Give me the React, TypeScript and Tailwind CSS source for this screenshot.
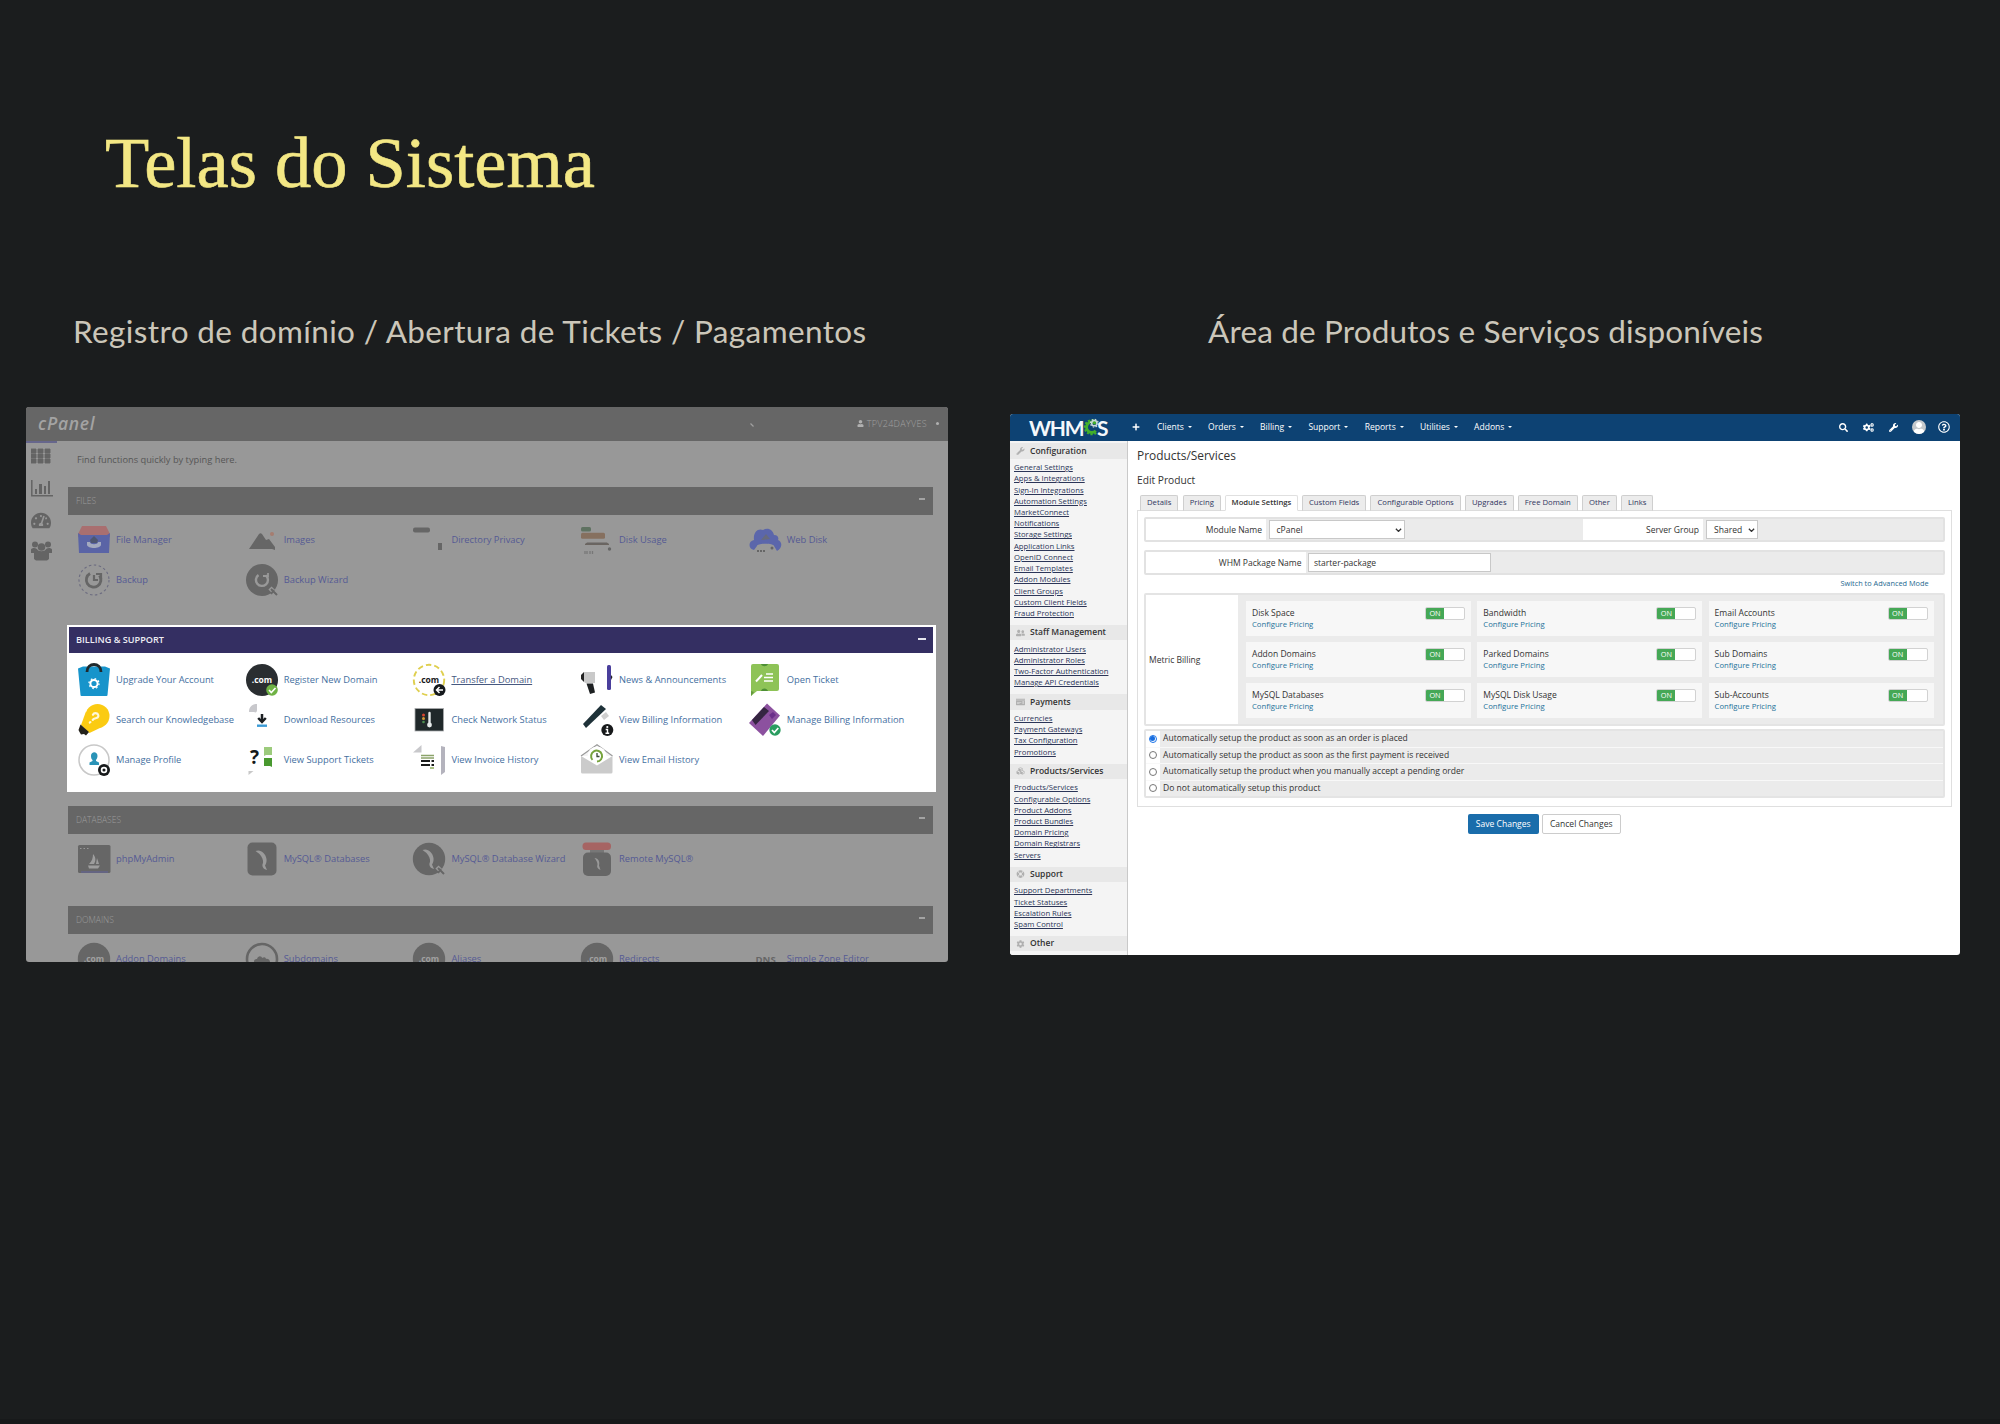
import React from "react";
import { FaSearch, FaCogs, FaWrench, FaUser, FaUserFriends, FaPlus, FaCubes, FaLifeRing, FaCog, FaTachometerAlt, FaMoneyCheck, FaRegQuestionCircle } from "react-icons/fa";

const G = "#666666";

function Icon({ children }: { children?: React.ReactNode }) {
  return (
    <svg viewBox="0 0 32 32" className="h-8 w-8 shrink-0 overflow-visible" fill="none">
      {children}
    </svg>
  );
}

const Com = ({ fill, y = 18.5 }: { fill: string; y?: number }) => (
  <text x="16" y={y} textAnchor="middle" fill={fill} fontSize="8.5" fontWeight="700" fontFamily="Open Sans, sans-serif">.com</text>
);

const Dolphin = ({ dy = 0 }: { dy?: number }) => (
  <path transform={`translate(0 ${dy})`} d="M9.500 8c5-2 10 2 11 8 .400 3-.500 5-1.500 6.500L21 27c-4-1-5.500-4-4-7 .500-3-1-6-3.500-9z" fill="#9b9b9b" />
);

const icons: Record<string, React.ReactNode> = {
  file: (<><path d="M4 2h24l4 8v3H0v-3z" fill="#a96f70" /><path d="M0 9l3 2h26l3-2-1 20H1z" fill="#5a64a6" /><path d="M9 18h3c0 3 8 3 8 0h3v3c-1 4-13 4-14 0z" fill="#a4aabf" /><path d="M12 16l4-4 4 4-1 3h-6z" fill="#4e5670" /></>),
  images: (<><path d="M3 25l10-15c1-1 2-1 3 0l4 6 3-1 6 8v3l-3-1z" fill={G} /><circle cx="26" cy="10" r="2" fill="#a67d70" /></>),
  privacy: (<><rect x="0" y="3.5" width="17" height="5" rx="2" fill={G} /><rect x="25" y="19" width="4" height="7" fill={G} /></>),
  usage: (<><rect x="0" y="3" width="10" height="4.5" rx="1.5" fill="#5f7261" /><rect x="0" y="8.7" width="24" height="6" rx="1.5" fill="#86705f" /><path d="M4 20.5l2-1.5h20l2 1.5z" fill="#666" stroke="#6b6560" /><circle cx="28.5" cy="25" r="1.7" fill={G} /><path d="M4 27v3M6 27v3M9 27v3M11.500 27v3" stroke="#777" strokeWidth="1.300" /></>),
  web: (<><path d="M5 26c-6-1-6-9 0-10C4 8 9 4 14 6c5-3 10 0 11 5 4 0 5 3 4 5 5 2 4 9-1 11l-3-5c0-3-17-3-17 0z" fill="#5b66ab" /><path d="M12 16l5-6 4 5z" fill="#686b7d" /><path d="M8 27h9" stroke="#666" strokeWidth="2" strokeDasharray="2 1" /><circle cx="23" cy="24" r="1.500" fill={G} /></>),
  backup: (<><circle cx="16" cy="16" r="15" stroke="#6c6c80" strokeWidth="1.1" strokeDasharray="2.500 2.500" /><path d="M12 9.500A7.300 7.300 0 1 0 21.500 11.500" stroke={G} strokeWidth="2.800" /><path d="M16 11v5h4M18 10h5V15" stroke={G} strokeWidth="2.200" /></>),
  wizard: (<><circle cx="16" cy="16" r="16" fill={G} /><path d="M12.500 11A6 6 0 1 0 20 11.500" stroke="#999" strokeWidth="2.400" /><path d="M17 12h5V9" stroke="#999" strokeWidth="1.800" /><path d="M24 24l7 7" stroke="#999" strokeWidth="4.500" /><path d="M25 25l6 6M25 30l3-4" stroke={G} strokeWidth="2" /></>),
  bag: (<><path d="M0 4.500l5-2h22l5 2L29.500 31a1 1 0 0 1-1 1h-25a1 1 0 0 1-1-1z" fill="#1794cb" /><path d="M9 8C9-2 23-2 23 8" stroke="#20282c" strokeWidth="2.800" /><circle cx="16" cy="19.500" r="3.600" stroke="#fff" strokeWidth="2" /><circle cx="16" cy="19.500" r="5" stroke="#fff" strokeWidth="1.300" strokeDasharray="1.600 2.320" /></>),
  register: (<><circle cx="16" cy="16" r="16" fill="#2a2e31" /><Com fill="#fff" /><circle cx="26" cy="26" r="5.800" fill="#6fb244" /><path d="M23 26l2.300 2.500L29.500 24" stroke="#fff" strokeWidth="1.600" /></>),
  transfer: (<><circle cx="16" cy="16" r="15.200" stroke="#dfcf4e" strokeWidth="1.900" strokeDasharray="5.500 3" /><Com fill="#17191a" /><circle cx="26.500" cy="26" r="6" fill="#15191c" /><path d="M30 26h-6M26.500 23l-3 3 3 3" stroke="#fff" strokeWidth="1.500" /></>),
  news: (<><path d="M0 11l3-3v10l-3-3z" fill="#222" /><path d="M3 8h11v11H5c-2 0-2-2-2-3z" fill="#c9c9c9" /><path d="M5.500 19.500H12l2 9-5 1.500z" fill="#1d2022" /><rect x="26" y="1" width="4" height="25" rx="1.500" fill="#4a3f9c" /><path d="M30 11l1.500 2-1.500 3z" fill="#222" /></>),
  ticket: (<><path d="M2 2a2 2 0 0 1 2-2h24a2 2 0 0 1 2 2v23a2 2 0 0 1-2 2H8l-6 5z" fill="#8ec357" /><path d="M12 0h7c-1 3-6 3-7 0zM12 27h7c-1-3.500-6-3.500-7 0z" fill="#4d8f35" /><path d="M2 27l3 1-3 4z" fill="#64983f" /><path d="M7 17.500l6-6.500" stroke="#fff" strokeWidth="2" /><path d="M17 10h7M15 13.500h9M15 17h9" stroke="#fff" strokeWidth="1.500" /></>),
  bulb: (<><circle cx="19.500" cy="12" r="12" fill="#fbcb12" /><path d="M8 7.500L3 21l8.500 8L24 23z" fill="#fbcb12" /><path d="M2.500 20.500L11 28l-3 3.500-2-1.500-3 .500L1.500 28l-1-2z" fill="#24221c" /><path d="M14.500 11c1-3 6-2.500 5.500 1-.400 2.500-4 1.500-5 4M13 18.500l-.500.500" stroke="#fff8d8" strokeWidth="2.200" strokeLinecap="round" transform="rotate(8 16 14)" /></>),
  download: (<><path d="M3 8c0-5 3-8 8-8v6c0 2-1 3-3 2z" fill="#c8c8cc" /><path d="M16 10v7M12.200 14l3.800 4 3.800-4" stroke="#1b1f22" strokeWidth="2.500" /><rect x="11" y="20.500" width="10" height="2.400" fill="#3b9bd6" /></>),
  network: (<><rect x="2" y="4.500" width="28.500" height="22.500" fill="#20282a" stroke="#a9aaac" strokeWidth=".8" /><circle cx="10.500" cy="11" r="1.500" fill="#d9442f" /><circle cx="10.500" cy="14.500" r="1.500" fill="#d59a35" /><circle cx="10.500" cy="18" r="1.300" fill="#4c8f50" /><path d="M16.500 9v11" stroke="#e8ecec" strokeWidth="2.400" strokeLinecap="round" /><circle cx="16.500" cy="21" r="2.400" fill="#e8ecec" /></>),
  billing: (<><path d="M2 20L20 1l5 4L5 24z" fill="#1e3138" /><path d="M20 12l5-4 3 4-5 4z" fill="#cfcfcf" /><circle cx="26.300" cy="26" r="6" fill="#17191b" /><circle cx="26.300" cy="23" r="1.100" fill="#fff" /><path d="M24.700 25.500h1.800v3.500M24.500 29.200h3.700" stroke="#fff" strokeWidth="1.400" /></>),
  card: (<><path d="M0 19L18-.500l13 12L14 32z" fill="#8c519f" /><path d="M3 16L15 3l5 4L6.500 21z" fill="#352541" /><path d="M20 11l4-3 3 3-4 4z" fill="#6b2f8a" /><circle cx="26" cy="26" r="5.700" fill="#2a9d60" /><path d="M23 26l2.300 2.500 4-4.500" stroke="#fff" strokeWidth="1.700" /></>),
  profile: (<><circle cx="16" cy="16" r="15" stroke="#c8c8c8" strokeWidth="1.500" /><path d="M13 12c0-5 6.500-5 6.500 0 0 2-1 3-1.500 4v1l3 1.500V21H11.500v-2.500L14.500 17v-1c-1-1-1.500-2-1.500-4z" fill="#2a93b7" /><circle cx="26" cy="26" r="6" fill="#17191b" /><circle cx="26" cy="26" r="2.400" stroke="#fff" strokeWidth="1.700" /></>),
  support: (<><text x="4" y="19.500" fontSize="19" fontWeight="700" fill="#15181a" fontFamily="Open Sans, sans-serif">?</text><path d="M18 3h8v8h-6l-2 1z" fill="#9ccb7c" /><path d="M18 14h8v9l-2-1h-6z" fill="#49992f" /><path d="M2.500 27h5l-5 4z" fill="#c8c8c8" /></>),
  invoice: (<><path d="M0 8.500L8.500 1v7.500z" fill="#c8c8cb" /><path d="M8 11.500h13M8 14h13" stroke="#8ca36a" strokeWidth="1.600" /><path d="M8 17h9M18.500 17h2.500M8 21h9M18.500 21h2.500" stroke="#1a1c1c" strokeWidth="2" /><path d="M17 24h4" stroke="#8fae5e" strokeWidth="1.500" /><path d="M28 2l4 1v25l-4 3z" fill="#b4b3bd" /></>),
  email: (<><path d="M0 12L16 .800 31.500 12" stroke="#9a9a9a" strokeWidth="1.200" fill="#f3f3f3" /><circle cx="16" cy="12" r="9.500" fill="#fff" /><path d="M0 12l16 9.500L31.500 12v16a1.500 1.500 0 0 1-1.500 1.500H1.500A1.500 1.500 0 0 1 0 28z" fill="#cbcbcb" /><path d="M11.500 15.800A5.500 5.500 0 1 1 16 17.600" stroke="#76a33c" strokeWidth="2" /><path d="M16 9v3.500h2.500" stroke="#3b4a36" strokeWidth="1.300" /></>),
  php: (<><rect x="0" y="2" width="32.500" height="28" rx="1.500" fill={G} /><path d="M2 5.500h9" stroke="#999" strokeDasharray="1.500 2" /><path d="M3 29h27" stroke="#64648c" strokeWidth="1.300" /><path d="M15 11c3 3 3 7 1 10h-5c3-3 4-6 4-10zM19 15l2 6h-3zM10 22.500h12l-2 3h-9z" fill="#9d9d9d" /></>),
  mysql: (<><rect x="1.500" y="-.5" width="29" height="33" rx="5" fill={G} /><Dolphin /></>),
  mysqlwiz: (<><circle cx="16" cy="16" r="16.200" fill={G} /><Dolphin dy={-1} /><path d="M24 24l7 7" stroke="#999" strokeWidth="4.500" /><path d="M25 25l6 6M25 30l3-4" stroke={G} strokeWidth="2" /></>),
  remote: (<><rect x="1.500" y="-.5" width="28.500" height="7.500" rx="3.500" fill="#a66463" /><path d="M9 7h14v3H9z" fill="#777" /><rect x="2" y="9.500" width="28" height="23.500" rx="5" fill={G} /><path d="M13.500 15c4 0 5.500 4 4.500 7.500l1.500 4.500c-3-1-4-3-3-5.500 0-2-1-4-3-6.500z" fill="#999" /></>),
  com: (<><circle cx="16" cy="16" r="16.200" fill={G} /><Com fill="#a0a0a0" /></>),
  sub: (<><circle cx="16" cy="16" r="15" stroke={G} strokeWidth="2.600" /><path d="M8 19c0-3 2-3 3-3 1-4 5-3 5-1 3-2 4 0 4 1 3-1 4 2 4 3z" fill={G} /></>),
  dns: (<text x="6.500" y="20" fontSize="9.600" fontWeight="700" fill="#666" fontFamily="Open Sans, sans-serif">DNS</text>),
};

type Item = [string, string];

function Apps({ items, light }: { items: Item[]; light?: boolean }) {
  return (
    <div className="grid auto-rows-[40px] grid-cols-[repeat(5,167.7px)]">
      {items.map(([k, label]) => (
        <div key={label} className="flex items-center gap-[6px] whitespace-nowrap">
          <Icon>{icons[k]}</Icon>
          <span className={light ? (k === "transfer" ? "text-[#46587f] underline" : "text-[#456f9f]") : "font-medium text-[#555a94]"}>{label}</span>
        </div>
      ))}
    </div>
  );
}

function DimPanel({ title, items, className }: { title: string; items: Item[]; className: string }) {
  return (
    <section className={className}>
      <div className="mb-[5px] flex h-7 items-center justify-between bg-[#666] px-2">
        <span className="text-[8.5px] font-light text-[#9c9c9c]">{title}</span>
        <span className="mb-1 h-[1.5px] w-[6px] bg-[#a3a3a3]" />
      </div>
      <div className="pl-[10px]">
        <Apps items={items} />
      </div>
    </section>
  );
}

function CPanel() {
  return (
    <div className="ml-[26px] mt-[61px] flex h-[555px] w-[922px] flex-col overflow-hidden rounded-[3px] bg-[#989898] text-[9.33px] leading-none">
      <div className="flex h-[33.5px] shrink-0 items-center bg-[#666] pb-px pl-[12px] pr-[9px]">
        <span className="text-[17.5px] font-semibold italic tracking-[0.7px] text-[#a3a3a3]">cPanel</span>
        <svg viewBox="0 0 4 4" className="ml-auto mr-[103px] mt-[3px] h-1 w-1"><path d="M.5.500l3 3" stroke="#a0a0a0" strokeWidth="1.200" /></svg>
        <span className="flex items-center text-[#a0a0a0]">
          <FaUser className="mr-[3px] h-[7px] w-[7px] text-[#b0b0b0]" />
          <span className="text-[9px] font-light tracking-[0.3px]">TPV24DAYVES</span>
          <span className="ml-[9px] h-[3px] w-[3px] rounded-full bg-[#b0b0b0]" />
        </span>
      </div>
      <div className="flex min-h-0 flex-1">
        <div className="flex w-[42px] shrink-0 flex-col text-[#646464]">
          <div className="h-[2px] w-[31px] bg-[#66668c]" />
          <svg viewBox="0 0 20 16" className="ml-[5px] mt-[5px] h-4 w-5">
            <path d="M0 1h5v4H0zM7 1h5v4H7zM14 1h5v4h-5zM0 6h5v4H0zM7 6h5v4H7zM14 6h5v4h-5zM0 11h5v4H0zM7 11h5v4H7zM14 11h5v4h-5z" fill="currentColor" stroke="currentColor" strokeWidth=".9" />
          </svg>
          <svg viewBox="0 0 22 17" className="ml-[5px] mt-[16px] h-[17px] w-[22px]">
            <path d="M.8 0v15.800H22" fill="none" stroke="currentColor" strokeWidth="1.500" />
            <path d="M4 9h2v5H4zM8 4h3v10H8zM13 6h2v8h-2zM17 1h2v13h-2z" fill="currentColor" />
          </svg>
          <FaTachometerAlt className="ml-[5px] mt-[14px] h-[19px] w-5" />
          <svg viewBox="0 0 21 20" className="ml-[5px] mt-[11px] h-5 w-[21px]" fill="currentColor">
            <circle cx="4" cy="3.500" r="3" />
            <circle cx="17" cy="3.500" r="3" />
            <circle cx="10.500" cy="6" r="3.800" />
            <path d="M0 8.500c1-2 4-2 6-.500 1 3 8 3 9 0 2-1.500 5-1.500 6 .500V12h-3v6l-2 1.500H5L3 18v-6H0z" />
          </svg>
        </div>
        <div className="mr-[15px] flex min-w-0 flex-1 flex-col whitespace-nowrap">
          <div className="flex h-[46.5px] shrink-0 items-start pl-[9px] pt-[14.500px] text-[9.27px] font-medium text-[#565656]">Find functions quickly by typing here.</div>
          <DimPanel className="h-[138px] shrink-0" title="FILES" items={[["file", "File Manager"], ["images", "Images"], ["privacy", "Directory Privacy"], ["usage", "Disk Usage"], ["web", "Web Disk"], ["backup", "Backup"], ["wizard", "Backup Wizard"]]} />
          <section className="-ml-px -mr-[3px] mb-[14px] h-[167px] shrink-0 bg-white pl-[2px] pr-[3px] pt-[2px]">
            <div className="mb-[7px] flex h-[26px] items-center justify-between bg-[#342f62] pl-[7px] pr-[7px]">
              <span className="text-[9.13px] font-semibold text-[#eeeef4]">BILLING &amp; SUPPORT</span>
              <span className="mb-[3px] h-[2px] w-2 bg-[#e5e5ee]" />
            </div>
            <div className="pl-[9px]">
              <Apps
                light
                items={[["bag", "Upgrade Your Account"], ["register", "Register New Domain"], ["transfer", "Transfer a Domain"], ["news", "News & Announcements"], ["ticket", "Open Ticket"], ["bulb", "Search our Knowledgebase"], ["download", "Download Resources"], ["network", "Check Network Status"], ["billing", "View Billing Information"], ["card", "Manage Billing Information"], ["profile", "Manage Profile"], ["support", "View Support Tickets"], ["invoice", "View Invoice History"], ["email", "View Email History"]]}
              />
            </div>
          </section>
          <DimPanel className="h-[100px] shrink-0" title="DATABASES" items={[["php", "phpMyAdmin"], ["mysql", "MySQL® Databases"], ["mysqlwiz", "MySQL® Database Wizard"], ["remote", "Remote MySQL®"]]} />
          <DimPanel className="h-[56px] shrink-0" title="DOMAINS" items={[["com", "Addon Domains"], ["sub", "Subdomains"], ["com", "Aliases"], ["com", "Redirects"], ["dns", "Simple Zone Editor"]]} />
        </div>
      </div>
    </div>
  );
}

const groups = [
  { title: "Configuration", Ico: FaWrench, links: ["General Settings", "Apps & Integrations", "Sign-In Integrations", "Automation Settings", "MarketConnect", "Notifications", "Storage Settings", "Application Links", "OpenID Connect", "Email Templates", "Addon Modules", "Client Groups", "Custom Client Fields", "Fraud Protection"] },
  { title: "Staff Management", Ico: FaUserFriends, links: ["Administrator Users", "Administrator Roles", "Two-Factor Authentication", "Manage API Credentials"] },
  { title: "Payments", Ico: FaMoneyCheck, links: ["Currencies", "Payment Gateways", "Tax Configuration", "Promotions"] },
  { title: "Products/Services", Ico: FaCubes, links: ["Products/Services", "Configurable Options", "Product Addons", "Product Bundles", "Domain Pricing", "Domain Registrars", "Servers"] },
  { title: "Support", Ico: FaLifeRing, links: ["Support Departments", "Ticket Statuses", "Escalation Rules", "Spam Control"] },
  { title: "Other", Ico: FaCog, links: [] as string[] },
];

const tabs = ["Details", "Pricing", "Module Settings", "Custom Fields", "Configurable Options", "Upgrades", "Free Domain", "Other", "Links"];
const metrics = ["Disk Space", "Bandwidth", "Email Accounts", "Addon Domains", "Parked Domains", "Sub Domains", "MySQL Databases", "MySQL Disk Usage", "Sub-Accounts"];
const setup = [
  "Automatically setup the product as soon as an order is placed",
  "Automatically setup the product as soon as the first payment is received",
  "Automatically setup the product when you manually accept a pending order",
  "Do not automatically setup this product",
];

function Logo() {
  return (
    <div className="flex h-full w-[102px] items-center pl-[19px] font-[Lato,sans-serif] text-[21px] font-bold text-[#f4f8fb]">
      <span className="tracking-[-1.2px]">WHM</span>
      <svg viewBox="0 0 18 18" className="-ml-[1px] h-[18px] w-[17px] overflow-visible" fill="none">
        <path d="M13.500 5.500A5.600 5.600 0 1 0 13.500 13" stroke="#43b02a" strokeWidth="3" />
        <path d="M14.800 4A7.500 7.500 0 1 0 14.800 14.500" stroke="#43b02a" strokeWidth="2.200" strokeDasharray="2.200 1.700" />
        <circle cx="12" cy="5" r="2.800" stroke="#c8d8d8" strokeWidth="1.600" />
        <circle cx="12" cy="5" r="4.100" stroke="#c8d8d8" strokeWidth="1.300" strokeDasharray="1.600 1.620" />
        <circle cx="12" cy="5" r="1.200" fill="#43b02a" />
      </svg>
      <span className="-ml-[2.500px]">S</span>
    </div>
  );
}

function Chevron() {
  return (
    <svg viewBox="0 0 8 5" className="h-[4.500px] w-[7px]" fill="none">
      <path d="M1 .8l3 3 3-3" stroke="#333" strokeWidth="1.500" />
    </svg>
  );
}

function Whmcs() {
  return (
    <div className="ml-[62px] mt-[68px] flex h-[541px] w-[950px] flex-col overflow-hidden rounded-[3px] bg-white text-[8.54px] leading-none text-[#333] whitespace-nowrap">
      <header className="flex h-[27px] shrink-0 items-center bg-[#0d4273] pb-px text-white">
        <Logo />
        <FaPlus className="ml-[20px] mr-[17px] h-[8px] w-[8px]" />
        {["Clients", "Orders", "Billing", "Support", "Reports", "Utilities", "Addons"].map((m) => (
          <span key={m} className="mr-[16.300px] flex items-center gap-1">
            {m}
            <span className="h-0 w-0 border-x-[2.500px] border-t-[2.500px] border-x-transparent border-t-white" />
          </span>
        ))}
        <div className="ml-auto flex items-center pr-[10px]">
          <FaSearch className="mr-[15px] h-[9px] w-[9px]" />
          <FaCogs className="mr-[15px] h-[9px] w-[11px]" />
          <FaWrench className="mr-[14px] h-[9px] w-[9px]" />
          <span className="mr-[12px] flex h-[14px] w-[14px] items-end justify-center overflow-hidden rounded-full bg-[#c5c9cc]">
            <FaUser className="h-[12px] w-[12px]" />
          </span>
          <FaRegQuestionCircle className="h-[12px] w-[12px]" />
        </div>
      </header>
      <div className="flex min-h-0 flex-1">
        <aside className="flex w-[118px] shrink-0 flex-col border-r border-[#c9c9c9] bg-[#f4f4f4] pt-[2.300px]">
          {groups.map(({ title, Ico, links }) => (
            <div key={title} className="shrink-0">
              <div className="flex h-[15.500px] items-center bg-[#e8e8e8] pl-[6px] font-semibold text-[8.52px] text-[#333]">
                <Ico className="mr-[5px] h-[8px] w-[9px] text-[#b0b0b0]" />
                {title}
              </div>
              <ul className="pb-[5.700px] pl-1 pt-[3.300px] text-[7.69px] leading-[11.22px] text-[#2b3558]">
                {links.map((l) => (
                  <li key={l} className="h-[11.22px] underline underline-offset-[1px]">{l}</li>
                ))}
              </ul>
            </div>
          ))}
        </aside>
        <main className="flex min-w-0 flex-1 flex-col pl-[9px] pr-[8.500px]">
          <h2 className="flex h-[30px] items-center text-[11.92px]">Products/Services</h2>
          <h3 className="flex h-[18px] items-center text-[10.21px]">Edit Product</h3>
          <div className="relative z-10 -mb-px mt-[6px] flex gap-[4.200px] pl-[3px] text-[7.69px]">
            {tabs.map((t) =>
              t === "Module Settings" ? (
                <span key={t} className="flex h-4 items-center rounded-t-[2px] border border-[#e0e0e0] border-b-white bg-white px-[5.500px] font-semibold">{t}</span>
              ) : (
                <span key={t} className="flex h-4 items-center rounded-t-[2px] border border-[#cfcfcf] border-b-[#dcdcdc] bg-[#ececec] px-[6px] text-[#2f3560]">{t}</span>
              ),
            )}
          </div>
          <div className="flex h-[297px] flex-col border border-[#dfdfdf] px-[6px] pt-[6px]">
            <div className="flex h-[25px] items-stretch rounded-[2px] border-2 border-[#e2e2e2] bg-[#ebebeb]">
              <div className="flex w-[120px] items-center justify-end bg-white pr-[4px] pt-px">Module Name</div>
              <div className="ml-[2.500px] flex h-[18.500px] w-[136px] items-center justify-between self-center border border-[#c8c8c8] bg-white pl-[7px] pr-[2px] pt-px">cPanel<Chevron /></div>
              <div className="ml-[178.500px] flex w-[120px] items-center justify-end bg-white pr-[4px] pt-px">Server Group</div>
              <div className="ml-[3px] flex h-[18.500px] w-[52px] items-center justify-between self-center border border-[#c8c8c8] bg-white pl-[7px] pr-[2px] pt-px">Shared<Chevron /></div>
            </div>
            <div className="mt-[8px] flex h-[25px] items-stretch rounded-[2px] border-2 border-[#e2e2e2] bg-[#ebebeb]">
              <div className="flex w-[159.500px] items-center justify-end bg-white pr-[4px] pt-px">WHM Package Name</div>
              <div className="ml-[2.500px] flex h-[18.500px] w-[183px] items-center self-center border border-[#c8c8c8] bg-white pl-[5px] pt-px">starter-package</div>
            </div>
            <div className="flex h-[18px] shrink-0 items-center justify-end pr-[16px] text-[7.33px] text-[#24678f]">Switch to Advanced Mode</div>
            <div className="flex h-[133px] shrink-0 rounded-[2px] border-2 border-[#e4e4e4] bg-[#ebebeb]">
              <div className="flex w-[92px] shrink-0 items-center bg-white pl-[3px] pt-px">Metric Billing</div>
              <div className="ml-[8px] mt-[6px] grid h-[117px] grid-cols-[repeat(3,225px)] gap-x-[6.300px] gap-y-[6px]">
                {metrics.map((m) => (
                  <div key={m} className="flex items-start justify-between bg-[#f7f7f7] pl-[6px] pr-[6px] pt-[6px]">
                    <div>
                      <div className="leading-[12px]">{m}</div>
                      <div className="text-[7.69px] leading-[11px] text-[#24729a]">Configure Pricing</div>
                    </div>
                    <div className="flex h-[12.500px] w-[40px] overflow-hidden rounded-[2px] border border-[#d2d2d2] bg-white">
                      <span className="flex w-[18px] items-center justify-center bg-[#45a856] text-[7.300px] text-white">ON</span>
                    </div>
                  </div>
                ))}
              </div>
            </div>
            <div className="mt-[3px] grid h-[69px] shrink-0 grid-rows-4 gap-px rounded-[2px] border-2 border-[#e4e4e4] bg-[#f8f8f8]">
              {setup.map((s, i) => (
                <div key={s} className="flex bg-white">
                  <span className="flex w-[14px] items-center justify-center pr-px">
                    {i === 0 ? (
                      <span className="flex h-[8px] w-[8px] items-center justify-center rounded-full border border-[#1a73e8] bg-white"><span className="h-[5px] w-[5px] rounded-full bg-[#1a6fe0]" /></span>
                    ) : (
                      <span className="h-[8px] w-[8px] rounded-full border border-[#777] bg-white" />
                    )}
                  </span>
                  <span className="flex flex-1 items-center bg-[#ebebeb] pl-[3px]">{s}</span>
                </div>
              ))}
            </div>
          </div>
          <div className="mt-[7px] flex justify-center gap-[3px]">
            <span className="flex h-[20px] w-[71px] items-center justify-center rounded-[2px] bg-[#1a6dab] text-white">Save Changes</span>
            <span className="flex h-[20px] w-[79px] items-center justify-center rounded-[2px] border border-[#ccc] bg-white">Cancel Changes</span>
          </div>
        </main>
      </div>
    </div>
  );
}

export default function App() {
  return (
    <div className="flex h-[1424px] w-[2000px] flex-col overflow-hidden border-b-[5px] border-[#17191a] bg-[#1b1d1e] font-['Open_Sans',sans-serif]">
      <h1 className="h-[315px] pl-[105px] pt-[127px] font-['Liberation_Serif',serif] text-[72.46px] leading-none text-[#f3e784] [-webkit-text-stroke:0.6px_#f3e784]">Telas do Sistema</h1>
      <div className="flex">
        <div className="w-[948px]">
          <p className="whitespace-nowrap pl-[73px] pt-px font-[Lato,sans-serif] text-[31.5px] leading-[30px] tracking-[0.37px] text-[#cbc6b9]">Registro de domínio / Abertura de Tickets / Pagamentos</p>
          <CPanel />
        </div>
        <div className="w-[1012px]">
          <p className="whitespace-nowrap pl-[260px] pt-px font-[Lato,sans-serif] text-[31.5px] leading-[30px] tracking-[0.15px] text-[#cbc6b9]">Área de Produtos e Serviços disponíveis</p>
          <Whmcs />
        </div>
      </div>
    </div>
  );
}
